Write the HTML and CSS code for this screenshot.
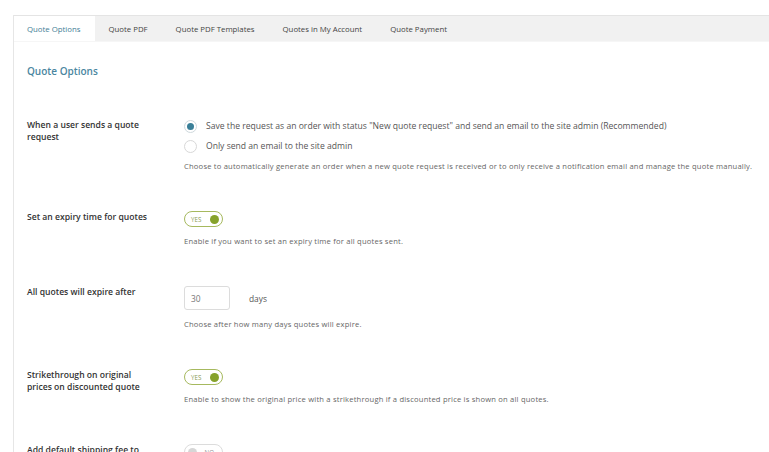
FILE: index.html
```html
<!DOCTYPE html>
<html lang="en">
<head>
    <meta charset="UTF-8">
    <meta name="viewport" content="width=device-width, initial-scale=1.0">
    <title>Quote Options</title>
    <link rel="stylesheet" href="styles.css">
</head>
<body>

<div class="wrap">
    <div class="panel">
        <nav class="tabs">
            <a href="#" class="tab active">Quote Options</a>
            <a href="#" class="tab">Quote PDF</a>
            <a href="#" class="tab">Quote PDF Templates</a>
            <a href="#" class="tab">Quotes in My Account</a>
            <a href="#" class="tab">Quote Payment</a>
        </nav>

        <div class="content">
            <h2 class="title">Quote Options</h2>

            <div class="row">
                <div class="label pad">When a user sends a quote request</div>
                <div class="field">
                    <div class="radios">
                        <label class="radio"><span class="dot checked"></span>Save the request as an order with status "New quote request" and send an email to the site admin (Recommended)</label>
                        <label class="radio"><span class="dot"></span>Only send an email to the site admin</label>
                    </div>
                    <p class="desc">Choose to automatically generate an order when a new quote request is received or to only receive a notification email and manage the quote manually.</p>
                </div>
            </div>

            <div class="row">
                <div class="label">Set an expiry time for quotes</div>
                <div class="field">
                    <span class="toggle on"><span class="toggle-text">YES</span><span class="knob"></span></span>
                    <p class="desc">Enable if you want to set an expiry time for all quotes sent.</p>
                </div>
            </div>

            <div class="row">
                <div class="label">All quotes will expire after</div>
                <div class="field">
                    <div class="inline">
                        <input class="num" type="text" value="30">
                        <span class="unit">days</span>
                    </div>
                    <p class="desc">Choose after how many days quotes will expire.</p>
                </div>
            </div>

            <div class="row">
                <div class="label">Strikethrough on original prices on discounted quote</div>
                <div class="field">
                    <span class="toggle on"><span class="toggle-text">YES</span><span class="knob"></span></span>
                    <p class="desc">Enable to show the original price with a strikethrough if a discounted price is shown on all quotes.</p>
                </div>
            </div>

            <div class="row">
                <div class="label">Add default shipping fee to quotes</div>
                <div class="field">
                    <span class="toggle off"><span class="knob"></span><span class="toggle-text">NO</span></span>
                </div>
            </div>
        </div>
    </div>
</div>

</body>
</html>
```

FILE: styles.css
```css
body {
    margin: 0;
    padding: 0;
    background: #fff;
    font-family: "Open Sans", "Liberation Sans", sans-serif;
    color: #444;
}

.wrap {
    padding: 15px 0 0 13px;
    height: 437px;
    overflow: hidden;
}

.panel {
    border-left: 1px solid #e6e6e6;
    height: 100%;
}

.tabs {
    display: flex;
    height: 25px;
    background: #f1f1f1;
    border-top: 1px solid #e4e4e4;
    border-bottom: 1px solid #f6f6f6;
}

.tab {
    display: flex;
    align-items: center;
    padding: 0 14px 0 13px;
    font-size: 7.8px;
    color: #444;
    text-decoration: none;
    margin-right: 1px;
}

.tab.active {
    background: #fff;
    color: #3f7e96;
}

.content {
    padding: 0 0 0 13px;
}

.title {
    margin: 0;
    padding: 22px 0 0;
    font-size: 10px;
    font-weight: 600;
    color: #4a86a0;
    line-height: 14px;
}

.row {
    display: flex;
    padding: 20px 0 20px;
}

.row:first-of-type {
    padding-top: 38px;
}

.label {
    width: 125px;
    flex: none;
    padding-right: 32px;
    font-size: 8.6px;
    font-weight: 600;
    line-height: 12px;
    color: #333;
}

.label.pad {
    padding-top: 3px;
}

.field {
    flex: 1;
}

.radio {
    display: flex;
    align-items: center;
    height: 20px;
    font-size: 8.6px;
    color: #555;
}

.dot {
    width: 13px;
    height: 13px;
    border: 1px solid #d8d8d8;
    border-radius: 50%;
    margin-right: 9px;
    box-sizing: border-box;
    background: #fff;
    position: relative;
}

.dot.checked {
    border-color: #cfd9dd;
}

.dot.checked::after {
    content: "";
    position: absolute;
    left: 2px;
    top: 2px;
    width: 7px;
    height: 7px;
    border-radius: 50%;
    background: #3a7f98;
}

.desc {
    margin: 9px 0 0;
    font-size: 7.6px;
    letter-spacing: 0.2px;
    line-height: 10px;
    color: #666;
}

.radios + .desc {
    margin-top: 5px;
}

.toggle {
    display: flex;
    align-items: center;
    justify-content: space-between;
    width: 39px;
    height: 16px;
    box-sizing: border-box;
    border: 1px solid #a6b95e;
    border-radius: 9px;
    padding: 0 3px 0 6px;
}

.toggle-text {
    font-size: 6.2px;
    color: #8a9a55;
}

.knob {
    width: 9px;
    height: 9px;
    border-radius: 50%;
    background: #86a22b;
}

.toggle.off {
    border-color: #dcdcdc;
    padding: 0 8px 0 3px;
}

.toggle.off .knob {
    background: #d6d6d6;
}

.toggle.off .toggle-text {
    color: #999;
}

.inline {
    display: flex;
    align-items: center;
}

.num {
    width: 46px;
    height: 24px;
    box-sizing: border-box;
    border: 1px solid #dcdcdc;
    border-radius: 3px;
    padding: 0 6px;
    font-family: "Open Sans", "Liberation Sans", sans-serif;
    font-size: 8.4px;
    color: #777;
}

.unit {
    margin-left: 19px;
    font-size: 8.4px;
    color: #555;
}
```
